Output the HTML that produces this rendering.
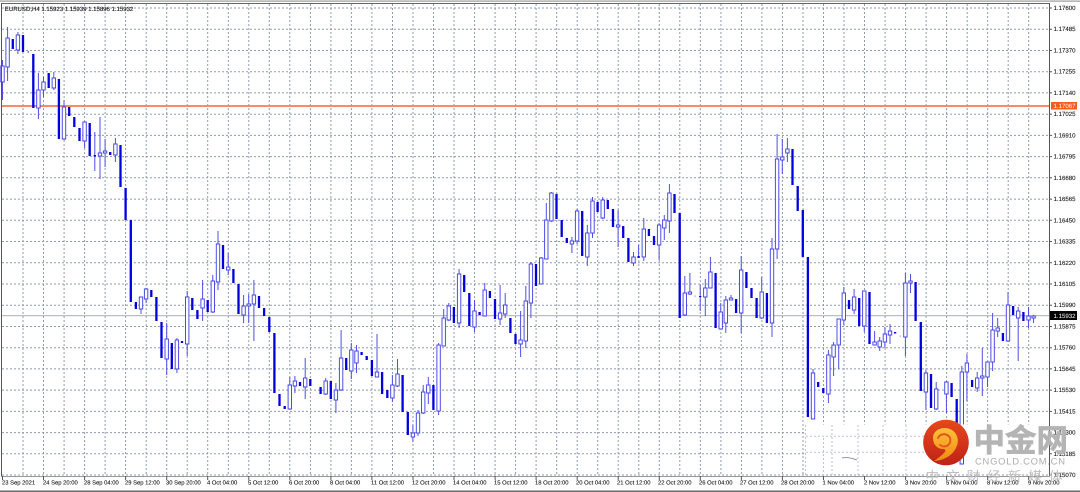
<!DOCTYPE html>
<html lang="zh">
<head>
<meta charset="utf-8">
<title>EURUSD,H4</title>
<style>
html,body{margin:0;padding:0;background:#fff;width:1080px;height:492px;overflow:hidden}
svg{display:block;position:absolute;left:0;top:0;filter:blur(.25px)}
text{font-family:"Liberation Sans","Noto Sans CJK SC",sans-serif;text-rendering:geometricPrecision}
.p{font-size:6.1px;fill:#111;stroke:#222;stroke-width:.1px}
.d{font-size:5.85px;fill:#111;stroke:#222;stroke-width:.1px}
</style>
</head>
<body>
<svg width="1080" height="492" viewBox="0 0 1080 492" xmlns="http://www.w3.org/2000/svg">
<defs>
<linearGradient id="lg" x1="0" y1="0" x2="0" y2="1"><stop offset="0" stop-color="#e6481a"/><stop offset="1" stop-color="#bf2218"/></linearGradient>
<linearGradient id="ly" x1="0" y1="0" x2="0" y2="1"><stop offset="0" stop-color="#fdc03c"/><stop offset="1" stop-color="#f28a12"/></linearGradient>
</defs>
<rect width="1080" height="492" fill="#fff"/>
<!-- grid -->
<path fill="none" stroke="#8f9bab" stroke-width="1" stroke-dasharray="2 2" d="M23 4V475M43.5 4V475M64.1 4V475M84.6 4V475M105.1 4V475M125.6 4V475M146.2 4V475M166.7 4V475M187.2 4V475M207.7 4V475M228.3 4V475M248.8 4V475M269.3 4V475M289.8 4V475M310.4 4V475M330.9 4V475M351.4 4V475M371.9 4V475M392.5 4V475M413 4V475M433.5 4V475M454 4V475M474.6 4V475M495.1 4V475M515.6 4V475M536.1 4V475M556.7 4V475M577.2 4V475M597.7 4V475M618.2 4V475M638.8 4V475M659.3 4V475M679.8 4V475M700.3 4V475M720.9 4V475M741.4 4V475M761.9 4V475M782.4 4V475M803 4V475M823.5 4V475M844 4V475M864.5 4V475M885.1 4V475M905.6 4V475M926.1 4V475M946.6 4V475M967.2 4V475M987.7 4V475M1008.2 4V475M1028.7 4V475"/>
<path fill="none" stroke="#8f9bab" stroke-width="1" stroke-dasharray="2 2" d="M2 8H1049M2 29.2H1049M2 50.5H1049M2 71.7H1049M2 92.9H1049M2 114.2H1049M2 135.4H1049M2 156.6H1049M2 177.8H1049M2 199.1H1049M2 220.3H1049M2 241.5H1049M2 262.8H1049M2 284H1049M2 305.2H1049M2 326.5H1049M2 347.7H1049M2 368.9H1049M2 390.1H1049M2 411.4H1049M2 432.6H1049M2 453.8H1049M2 475H1049"/>
<!-- bid and alert lines -->
<rect x="2" y="315.2" width="1047" height="1" fill="#a9aeb2"/>
<rect x="2" y="105.1" width="1047" height="1.8" fill="#fb7f52"/>
<!-- wicks -->
<path fill="none" stroke="#4f4fe6" stroke-width="1" d="M2.5 60V100M7.6 27V81M17.9 32V54M28.2 51V53M38.4 73V119M43.5 77V97M53.8 72V90M64 100V140M84.6 122V148M94.8 132V171M100 117V179M105.1 139V167M115.4 138V162M141 297V314M146.1 288V303M166.7 323V375M176.9 338V373M187.2 291V356M202.6 280V321M212.8 275V313M218 231V290M228.2 253V275M243.6 295V323M248.7 294V323M253.9 280V341M289.8 377V409M294.9 376V393M305.2 358V399M325.7 378V395M335.9 383V413M341.1 330V391M351.3 343V379M356.5 345V373M377 334V377M392.4 375V402M397.5 359V387M412.9 425V442M418 410V436M423.2 385V414M428.3 377V404M438.6 343V415M443.7 309V346M448.8 303V321M459.1 269V328M474.5 300V332M484.7 283V316M500.1 285V325M505.2 293V318M520.6 311V357M525.8 286V348M530.9 262V318M541.2 257V284M546.3 203V259M551.4 192V222M571.9 237V253M577.1 209V244M587.3 225V266M592.5 197V238M602.7 197V219M618.1 210V247M633.5 252V266M638.6 245V258M643.8 218V261M659.1 223V260M664.3 215V240M669.4 184V233M684.8 276V316M689.9 273V295M700.2 285V311M705.3 279V316M710.4 257V288M720.7 303V329M725.8 296V333M731 295V300M741.2 256V333M761.7 277V319M772 238V337M777.1 134V259M782.3 139V174M787.4 138V162M813 369V419M828.4 350V403M833.6 342V376M838.7 319V369M843.8 287V325M854.1 289V314M864.3 291V332M874.6 331V345M879.7 337V351M884.9 327V348M890 324V344M905.4 273V356M910.5 274V293M925.9 370V410M936.2 382V410M946.4 381V413M961.8 366V464M966.9 354V401M977.2 372V392M982.3 348V396M987.5 362V387M992.6 313V371M997.7 318V337M1008 292V342M1018.2 307V361M1028.5 307V328M1033.6 315V323"/>
<path fill="none" stroke="#8a8af0" stroke-width="1" d="M695.1 295.5V296.8M900.3 335.5V336.8"/>
<!-- down candles -->
<path fill="none" stroke="#0000dc" stroke-width="2.3" d="M12.8 39V49M23 35V52M33.3 54V108M48.7 73V88M58.9 79V139M69.2 107V116M74.3 117V127M79.5 128V141M89.7 123V156M94.8 155V156.5M110.2 152V155M120.5 145V187M125.6 188V220M130.8 220V302M135.9 302V309M151.3 290V297M156.4 297V321M161.5 322V358M171.8 343V369M182 341V343M192.3 298V310M197.4 310V319M207.7 300V312M223 245V269M233.4 269V283M238.5 284V314M259 296V308M264.1 308V316M269.3 317V332M274.4 333V393M279.5 394V406M284.7 406V409M300 382V386M310.3 379V386M320.6 387V394M330.8 381V399M346.2 358V370M361.6 352V355M366.7 356V360M371.9 360V376M382.1 372V394M387.3 390V398M402.6 375V412M407.8 412V435M433.4 385V410M453.9 307V323M464.2 275V292M469.3 293V326M479.6 312V315M489.9 291V298M495 299V319M510.4 318V333M515.5 334V344M536 264V286M556.5 194V219M561.7 220V237M566.8 238V243M582.2 211V256M597.6 202V212M607.8 200V209M613 209V227M623.2 226V238M628.4 238V262M638.6 256V258M648.9 229V236M654 236V245M674.5 194V213M679.7 213V318M700.2 296V297M715.6 273V328M736.1 299V313M746.4 272V288M751.5 288V298M756.6 298V318M766.9 293V323M792.5 149V185M797.7 186V211M802.8 210V257M807.9 257V417M818.2 382V387M823.3 388V393M849 300V309M859.2 298V326M869.5 292V344M895.1 332V333.5M915.6 282V321M920.8 322V391M931 374V408M951.6 383V397M956.7 399V423M972.1 380V387M1002.9 333V341M1013.1 306V315M1023.4 312V321"/>
<!-- up candles -->
<path fill="#fff" stroke="#4646e2" stroke-width=".95" d="M.8 66h3.4V82h-3.4zM5.9 38h3.4V67h-3.4zM16.2 35h3.4V50h-3.4zM36.7 90h3.4V108h-3.4zM41.8 82h3.4V90h-3.4zM52.1 78h3.4V88h-3.4zM62.3 107h3.4V139h-3.4zM82.9 122h3.4V141h-3.4zM98.3 153h3.4V156h-3.4zM103.4 151h3.4V153h-3.4zM113.7 144h3.4V155h-3.4zM139.3 297h3.4V309h-3.4zM144.4 289h3.4V299h-3.4zM165 339h3.4V359h-3.4zM175.2 340h3.4V369h-3.4zM185.5 297h3.4V344h-3.4zM200.9 299h3.4V308h-3.4zM211.1 281h3.4V312h-3.4zM216.3 244h3.4V282h-3.4zM226.5 267h3.4V270h-3.4zM241.9 306h3.4V315h-3.4zM247 304h3.4V306h-3.4zM252.2 295h3.4V304h-3.4zM288.1 385h3.4V409h-3.4zM293.2 381h3.4V386h-3.4zM303.5 378h3.4V387h-3.4zM324 381h3.4V394h-3.4zM334.2 390h3.4V400h-3.4zM339.4 358h3.4V390h-3.4zM349.6 350h3.4V371h-3.4zM354.8 351h3.4V363h-3.4zM375.3 372h3.4V377h-3.4zM390.7 385h3.4V398h-3.4zM395.8 374h3.4V386h-3.4zM411.2 433h3.4V437h-3.4zM416.3 413h3.4V433h-3.4zM421.5 392h3.4V413h-3.4zM426.6 385h3.4V393h-3.4zM436.9 345h3.4V411h-3.4zM442 318h3.4V346h-3.4zM447.1 306h3.4V320h-3.4zM457.4 274h3.4V323h-3.4zM472.8 311h3.4V327h-3.4zM483 290h3.4V316h-3.4zM498.4 313h3.4V319h-3.4zM503.5 305h3.4V314h-3.4zM518.9 340h3.4V344h-3.4zM524.1 301h3.4V341h-3.4zM529.2 264h3.4V303h-3.4zM539.5 258h3.4V284h-3.4zM544.6 220h3.4V259h-3.4zM549.7 193h3.4V221h-3.4zM570.2 241h3.4V244h-3.4zM575.4 211h3.4V241h-3.4zM585.6 233h3.4V257h-3.4zM590.8 201h3.4V233h-3.4zM601 200h3.4V218h-3.4zM616.4 225h3.4V227h-3.4zM631.8 257h3.4V263h-3.4zM642.1 229h3.4V257h-3.4zM657.4 225h3.4V245h-3.4zM662.6 220h3.4V228h-3.4zM667.7 193h3.4V221h-3.4zM683.1 293h3.4V315h-3.4zM688.2 292h3.4V294h-3.4zM703.6 288h3.4V297h-3.4zM708.7 272h3.4V288h-3.4zM719 312h3.4V329h-3.4zM724.1 300h3.4V323h-3.4zM729.3 298h3.4V300h-3.4zM739.5 270h3.4V313h-3.4zM760 292h3.4V318h-3.4zM770.3 249h3.4V323h-3.4zM775.4 159h3.4V249h-3.4zM780.6 157h3.4V160h-3.4zM785.7 149h3.4V153h-3.4zM811.3 373h3.4V419h-3.4zM826.7 355h3.4V394h-3.4zM831.9 345h3.4V357h-3.4zM837 319h3.4V345h-3.4zM842.1 293h3.4V320h-3.4zM852.4 297h3.4V310h-3.4zM862.6 291h3.4V326h-3.4zM872.9 342h3.4V345h-3.4zM878 341h3.4V347h-3.4zM883.2 334h3.4V342h-3.4zM888.3 331h3.4V335h-3.4zM903.7 283h3.4V337h-3.4zM908.8 281h3.4V283h-3.4zM924.2 373h3.4V392h-3.4zM934.5 389h3.4V409h-3.4zM944.7 382h3.4V394h-3.4zM960.1 372h3.4V464h-3.4zM965.2 363h3.4V372h-3.4zM975.5 378h3.4V388h-3.4zM980.6 376h3.4V378h-3.4zM985.8 362h3.4V377h-3.4zM990.9 330h3.4V362h-3.4zM996 328h3.4V331h-3.4zM1006.3 305h3.4V341h-3.4zM1016.5 311h3.4V318h-3.4zM1026.8 316h3.4V320h-3.4zM1031.9 316h3.4V318h-3.4z"/>
<!-- watermark wipes grid near logo -->
<rect x="806" y="424.5" width="243" height="50" fill="#fff"/>
<path fill="none" stroke="#bcc4cd" stroke-width="1" stroke-dasharray="2 2" d="M832 425V475M858 425V475M883 425V475M906 425V475M823.5 438V475M806 436.3H925M806 452.3H925M805.5 425V475"/>
<path fill="none" stroke="#4646e2" stroke-width="1" d="M960.1 457V464H963.5V457"/>
<path fill="none" stroke="#777" stroke-width=".7" d="M842 458C847 457 852 458 857 460"/>
<!-- frame -->
<rect x="0" y="0.5" width="1080" height="1.2" fill="#999"/>
<rect x="1" y="3" width="1049" height="1" fill="#666"/>
<rect x="1" y="3" width="1" height="473.5" fill="#555"/>
<rect x="1049" y="3" width="1" height="473" fill="#555"/>
<rect x="1" y="476" width="1049" height="1" fill="#999"/>
<rect x="0" y="490.5" width="1080" height="1.5" fill="#6a6a6a"/>
<!-- axis ticks -->
<path fill="none" stroke="#555" stroke-width="1" d="M1050 8H1052M1050 29.2H1052M1050 50.5H1052M1050 71.7H1052M1050 92.9H1052M1050 114.2H1052M1050 135.4H1052M1050 156.6H1052M1050 177.8H1052M1050 199.1H1052M1050 220.3H1052M1050 241.5H1052M1050 262.8H1052M1050 284H1052M1050 305.2H1052M1050 326.5H1052M1050 347.7H1052M1050 368.9H1052M1050 390.1H1052M1050 411.4H1052M1050 432.6H1052M1050 453.8H1052M1050 475H1052M2.5 476V480M43.5 476V480M84.6 476V480M125.6 476V480M166.7 476V480M207.7 476V480M248.8 476V480M289.8 476V480M330.9 476V480M371.9 476V480M413 476V480M454 476V480M495.1 476V480M536.1 476V480M577.2 476V480M618.2 476V480M659.3 476V480M700.3 476V480M741.4 476V480M782.4 476V480M823.5 476V480M864.5 476V480M905.6 476V480M946.6 476V480M987.7 476V480M1028.7 476V480"/>
<!-- header -->
<text x="4.8" y="10.8" class="p" textLength="128.5" lengthAdjust="spacing">EURUSD,H4  1.15923 1.15939 1.15896 1.15932</text>
<!-- price axis -->
<text x="1053.5" y="10" class="p">1.17600</text>
<text x="1053.5" y="31.2" class="p">1.17485</text>
<text x="1053.5" y="52.5" class="p">1.17370</text>
<text x="1053.5" y="73.7" class="p">1.17255</text>
<text x="1053.5" y="94.9" class="p">1.17140</text>
<text x="1053.5" y="116.2" class="p">1.17025</text>
<text x="1053.5" y="137.4" class="p">1.16910</text>
<text x="1053.5" y="158.6" class="p">1.16795</text>
<text x="1053.5" y="179.8" class="p">1.16680</text>
<text x="1053.5" y="201.1" class="p">1.16565</text>
<text x="1053.5" y="222.3" class="p">1.16450</text>
<text x="1053.5" y="243.5" class="p">1.16335</text>
<text x="1053.5" y="264.8" class="p">1.16220</text>
<text x="1053.5" y="286" class="p">1.16105</text>
<text x="1053.5" y="307.2" class="p">1.15990</text>
<text x="1053.5" y="328.5" class="p">1.15875</text>
<text x="1053.5" y="349.7" class="p">1.15760</text>
<text x="1053.5" y="370.9" class="p">1.15645</text>
<text x="1053.5" y="392.1" class="p">1.15530</text>
<text x="1053.5" y="413.4" class="p">1.15415</text>
<text x="1053.5" y="434.6" class="p">1.15300</text>
<text x="1053.5" y="455.8" class="p">1.15185</text>
<text x="1053.5" y="477" class="p">1.15070</text>
<rect x="1051" y="102" width="26" height="7.5" fill="#fb5a1e"/>
<text x="1053.5" y="108" class="p" style="fill:#fff;stroke:none">1.17067</text>
<rect x="1050" y="311" width="27" height="9" fill="#000"/>
<text x="1053.5" y="317.8" class="p" style="fill:#fff;stroke:none">1.15932</text>
<!-- time axis -->
<text x="2" y="484.6" class="d">23 Sep 2021</text>
<text x="43" y="484.6" class="d">24 Sep 20:00</text>
<text x="84" y="484.6" class="d">28 Sep 04:00</text>
<text x="125" y="484.6" class="d">29 Sep 12:00</text>
<text x="166" y="484.6" class="d">30 Sep 20:00</text>
<text x="207" y="484.6" class="d">4 Oct 04:00</text>
<text x="248" y="484.6" class="d">5 Oct 12:00</text>
<text x="289" y="484.6" class="d">6 Oct 20:00</text>
<text x="330" y="484.6" class="d">8 Oct 04:00</text>
<text x="371" y="484.6" class="d">11 Oct 12:00</text>
<text x="412" y="484.6" class="d">12 Oct 20:00</text>
<text x="453" y="484.6" class="d">14 Oct 04:00</text>
<text x="494" y="484.6" class="d">15 Oct 12:00</text>
<text x="535" y="484.6" class="d">18 Oct 20:00</text>
<text x="576" y="484.6" class="d">20 Oct 04:00</text>
<text x="617" y="484.6" class="d">21 Oct 12:00</text>
<text x="658" y="484.6" class="d">22 Oct 20:00</text>
<text x="699" y="484.6" class="d">26 Oct 04:00</text>
<text x="740" y="484.6" class="d">27 Oct 12:00</text>
<text x="781" y="484.6" class="d">28 Oct 20:00</text>
<text x="822.5" y="484.6" class="d">1 Nov 04:00</text>
<text x="864" y="484.6" class="d">2 Nov 12:00</text>
<text x="905" y="484.6" class="d">3 Nov 20:00</text>
<text x="946" y="484.6" class="d">5 Nov 04:00</text>
<text x="987" y="484.6" class="d">8 Nov 12:00</text>
<text x="1028" y="484.6" class="d">9 Nov 20:00</text>
<!-- logo -->
<circle cx="946" cy="442.5" r="22.8" fill="url(#lg)"/>
<path fill="url(#ly)" d="M934 461C947 460 955 453 957.5 444C959.5 435 953 428 945 428C938 428 933 432 933 438C933 444 937 449 943 449C946 449 946 451 944 453C941 456 937 459 934 461Z"/>
<path fill="none" stroke="#e2561b" stroke-width="1.9" stroke-linecap="round" d="M938 438C940 433 948 433 950 438C952 444 946 449 940 445"/>
<text x="973.5" y="451.5" style="font-size:31.5px;font-weight:700;fill:#b4b4b4;stroke:#b4b4b4;stroke-width:.7px;font-family:'Liberation Sans','Noto Sans CJK SC',sans-serif">中金网</text>
<text x="975" y="464.3" style="font-size:9.4px;fill:#adadad" textLength="90" lengthAdjust="spacing">CNGOLD.COM.CN</text>
<text x="925.5" y="481" style="font-size:13.5px;fill:#bdbdbd;font-family:'Liberation Sans','Noto Sans CJK SC',sans-serif" textLength="137" lengthAdjust="spacing">中文财经新媒体</text>
</svg>
</body>
</html>
